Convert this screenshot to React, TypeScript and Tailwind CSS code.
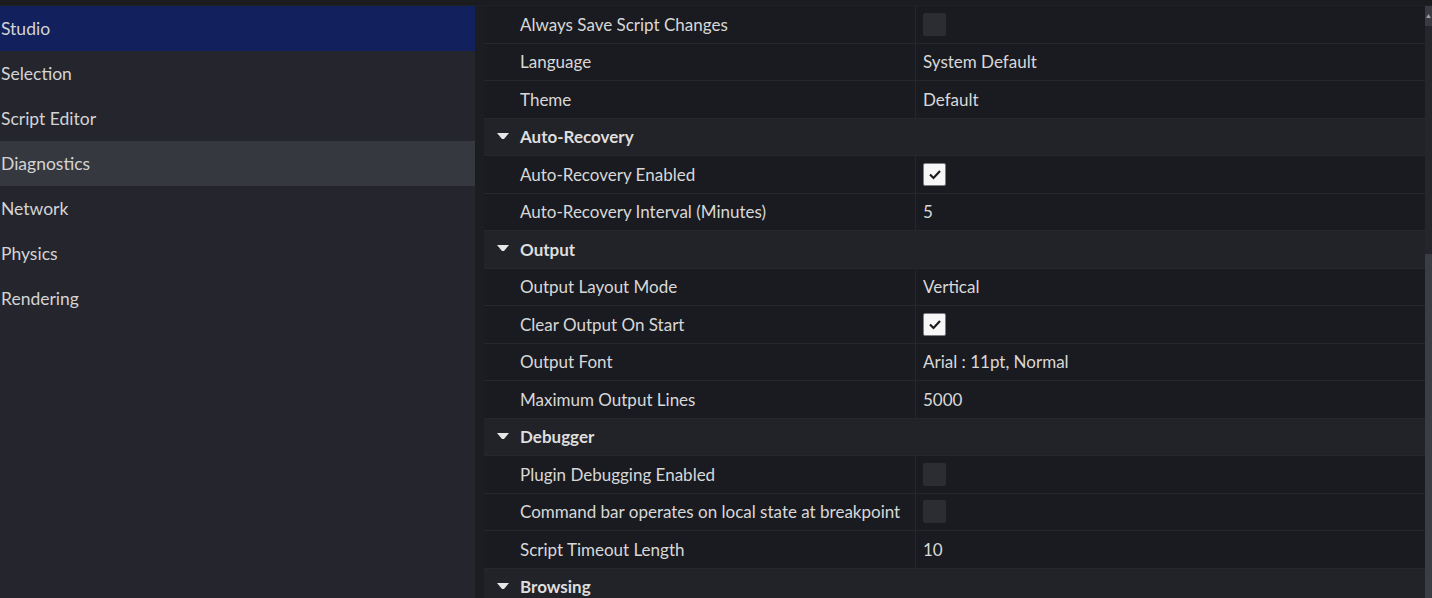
import React from "react";

type Row =
  | { kind: "header"; label: string }
  | { kind: "text"; label: string; value: string }
  | { kind: "check"; label: string; checked: boolean };

const rows: Row[] = [
  { kind: "check", label: "Always Save Script Changes", checked: false },
  { kind: "text", label: "Language", value: "System Default" },
  { kind: "text", label: "Theme", value: "Default" },
  { kind: "header", label: "Auto-Recovery" },
  { kind: "check", label: "Auto-Recovery Enabled", checked: true },
  { kind: "text", label: "Auto-Recovery Interval (Minutes)", value: "5" },
  { kind: "header", label: "Output" },
  { kind: "text", label: "Output Layout Mode", value: "Vertical" },
  { kind: "check", label: "Clear Output On Start", checked: true },
  { kind: "text", label: "Output Font", value: "Arial : 11pt, Normal" },
  { kind: "text", label: "Maximum Output Lines", value: "5000" },
  { kind: "header", label: "Debugger" },
  { kind: "check", label: "Plugin Debugging Enabled", checked: false },
  { kind: "check", label: "Command bar operates on local state at breakpoint", checked: false },
  { kind: "text", label: "Script Timeout Length", value: "10" },
  { kind: "header", label: "Browsing" },
];

const categories = ["Studio", "Selection", "Script Editor", "Diagnostics", "Network", "Physics", "Rendering"];

function Checkbox({ checked }: { checked: boolean }) {
  if (checked) {
    return (
      <div className="w-[23px] h-[23px] rounded-[2px] bg-[#f7f7f7] border border-[#7d7e84] flex items-center justify-center">
        <svg width="14" height="11" viewBox="0 0 14 11">
          <path d="M2 5.5 L5.5 9 L12 2" fill="none" stroke="#1b1b1b" strokeWidth="2.2" />
        </svg>
      </div>
    );
  }
  return <div className="w-[23px] h-[23px] rounded-[2px] bg-[#2c2d33]" />;
}

function SettingRow({ row }: { row: Row }) {
  if (row.kind === "header") {
    return (
      <div className="h-[37.5px] shrink-0 flex items-center bg-[#222328] border-b border-[#26272c]">
        <div className="w-[36px] flex justify-center pl-[2px]">
          <svg width="12" height="8" viewBox="0 0 12 8">
            <path d="M0 0 H12 L7 6 H5 Z" fill="#e6e6e6" />
          </svg>
        </div>
        <span className="font-bold text-[17px] text-[#dedede]">{row.label}</span>
      </div>
    );
  }
  return (
    <div className="h-[37.5px] shrink-0 flex bg-[#1a1b20] border-b border-[#26272c]">
      <div className="w-[432px] shrink-0 flex items-center pl-[36px] border-r border-[#25262b] text-[17px] text-[#d8d8d8]">
        {row.label}
      </div>
      <div className="flex-1 flex items-center pl-[7px] text-[17px] text-[#d8d8d8]">
        {row.kind === "text" ? row.value : <Checkbox checked={row.checked} />}
      </div>
    </div>
  );
}

export default function App() {
  return (
    <div
      className="w-[1432px] h-[598px] overflow-hidden bg-[#1b1c20] flex flex-col"
      style={{ fontFamily: "Lato, 'Noto Sans', sans-serif" }}
    >
      <div className="h-[6px] shrink-0 bg-[#1b1c20] border-b border-[#202126]" />
      <div className="flex flex-1 min-h-0">
        <nav className="w-[475px] shrink-0 bg-[#25262d] flex flex-col">
          {categories.map((c) => (
            <div
              key={c}
              className={
                "h-[45px] shrink-0 flex items-center pl-[1px] pt-[2px] text-[17.5px] text-[#d4d4d4] " +
                (c === "Studio" ? "bg-[#12215e]" : c === "Diagnostics" ? "bg-[#363840]" : "")
              }
            >
              {c}
            </div>
          ))}
        </nav>
        <div className="w-[9px] shrink-0 bg-[#1c1d21]" />
        <main className="flex-1 min-w-0 flex flex-col overflow-hidden">
          {rows.map((r, i) => (
            <SettingRow key={i} row={r} />
          ))}
        </main>
        <div className="w-[7px] shrink-0 bg-[#25262b] flex flex-col">
          <div className="h-[20px] bg-[#3a3b42] flex items-center justify-center">
            <svg width="5" height="4" viewBox="0 0 5 4">
              <path d="M0 4 L2.5 0 L5 4 Z" fill="#9a9ba0" />
            </svg>
          </div>
          <div className="h-[228px]" />
          <div className="flex-1 bg-[#3b3d45]" />
        </div>
      </div>
    </div>
  );
}
